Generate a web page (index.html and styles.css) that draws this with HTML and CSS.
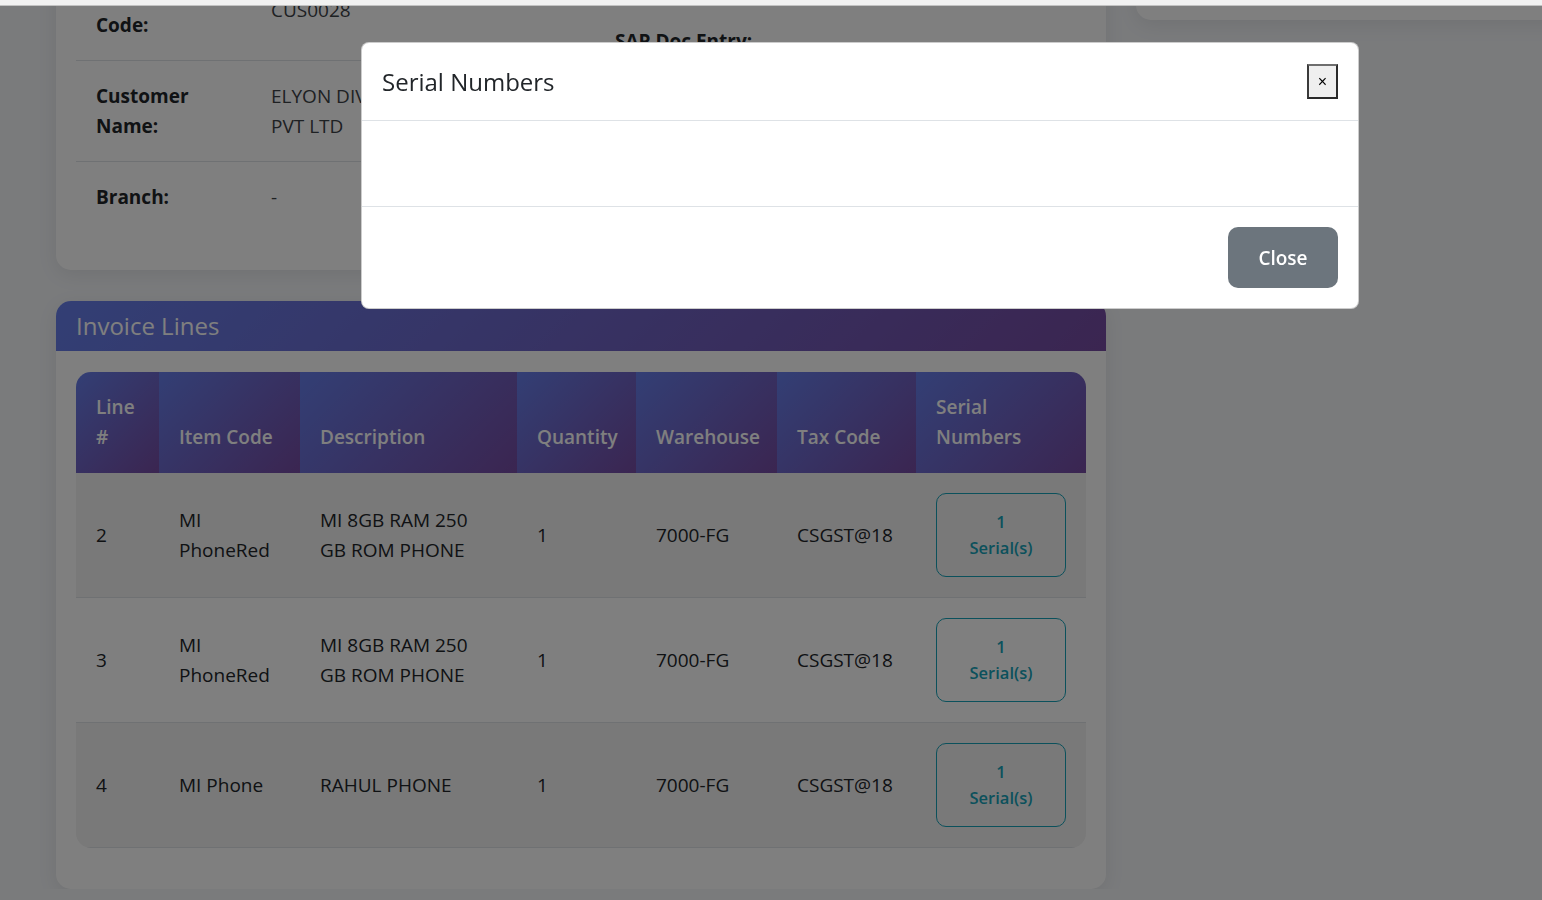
FILE: index.html
```html
<!DOCTYPE html>
<html lang="en">
<head>
<meta charset="utf-8">
<title>Invoice Details</title>
<link rel="stylesheet" href="styles.css">
</head>
<body>
<div class="topbar"></div>

<div class="page">
  <div class="main">
    <section class="card info-card">
      <div class="info-grid">
        <table class="kv">
          <tr><th>Customer Code:</th><td>CUS0028</td></tr>
          <tr><th>Customer Name:</th><td>ELYON DIVINE ENTERPRISES PVT LTD</td></tr>
          <tr><th>Branch:</th><td>-</td></tr>
        </table>
        <table class="kv kv-right">
          <tr><th>SAP Doc Entry:</th><td></td></tr>
          <tr><th>Status:</th><td>Posted</td></tr>
        </table>
      </div>
    </section>

    <section class="card lines-card">
      <header class="card-head"><h2 class="card-title">Invoice Lines</h2></header>
      <div class="card-body">
        <div class="table-wrap">
          <table class="lines">
            <colgroup>
              <col class="c-line"><col class="c-item"><col class="c-desc"><col class="c-qty"><col class="c-wh"><col class="c-tax"><col class="c-serial">
            </colgroup>
            <thead>
              <tr>
                <th>Line #</th><th>Item Code</th><th>Description</th><th>Quantity</th><th>Warehouse</th><th>Tax Code</th><th>Serial Numbers</th>
              </tr>
            </thead>
            <tbody>
              <tr>
                <td>2</td><td>MI PhoneRed</td><td>MI 8GB RAM 250 GB ROM PHONE</td><td>1</td><td class="nowrap">7000-FG</td><td class="nowrap">CSGST@18</td>
                <td><button class="serial-btn"><span class="line">1</span><span class="line">Serial(s)</span></button></td>
              </tr>
              <tr>
                <td>3</td><td>MI PhoneRed</td><td>MI 8GB RAM 250 GB ROM PHONE</td><td>1</td><td class="nowrap">7000-FG</td><td class="nowrap">CSGST@18</td>
                <td><button class="serial-btn"><span class="line">1</span><span class="line">Serial(s)</span></button></td>
              </tr>
              <tr>
                <td>4</td><td>MI Phone</td><td>RAHUL PHONE</td><td>1</td><td class="nowrap">7000-FG</td><td class="nowrap">CSGST@18</td>
                <td><button class="serial-btn"><span class="line">1</span><span class="line">Serial(s)</span></button></td>
              </tr>
            </tbody>
          </table>
        </div>
      </div>
    </section>
  </div>

  <aside class="side">
    <div class="card side-card"></div>
  </aside>
</div>

<div class="backdrop"></div>
<div class="modal" role="dialog">
  <div class="modal-header">
    <h5 class="modal-title">Serial Numbers</h5>
    <button class="x-btn">×</button>
  </div>
  <div class="modal-body"></div>
  <div class="modal-footer">
    <button class="btn-close-modal">Close</button>
  </div>
</div>
</body>
</html>
```

FILE: styles.css
```css
html, body {
  margin: 0;
  padding: 0;
}

body {
  font-family: "Open Sans", "Noto Sans", sans-serif;
  font-size: 19px;
  line-height: 30px;
  color: #212529;
  background: #f4f6f9;
  overflow: hidden;
}

.topbar {
  position: fixed;
  top: 0;
  left: 0;
  right: 0;
  height: 5px;
  background: #f1f1f1;
  border-bottom: 1px solid #c2c2c2;
  z-index: 20;
}

.page {
  display: flex;
  align-items: flex-start;
  gap: 30px;
  padding-left: 56px;
  margin-top: -60px;
  width: max-content;
}

.main {
  width: 1050px;
  display: flex;
  flex-direction: column;
  gap: 31px;
}

.side {
  width: 480px;
}

.card {
  background: #fff;
  border-radius: 15px;
  box-shadow: 0 5px 20px rgba(0, 0, 0, 0.08);
}

.side-card {
  height: 80px;
}

/* info card */
.info-card {
  padding: 20px;
}

.info-grid {
  display: grid;
  grid-template-columns: 1fr 1fr;
  gap: 28px;
  align-items: start;
}

.kv {
  width: 100%;
  border-collapse: collapse;
  margin-bottom: 18px;
}

.kv th,
.kv td {
  padding: 20px;
  text-align: left;
  vertical-align: middle;
  border-bottom: 1px solid #dee2e6;
}

.kv tr:last-child th,
.kv tr:last-child td {
  border-bottom: 0;
}

.kv th {
  width: 135px;
  font-weight: 700;
  color: #212529;
}

.kv td {
  color: #3d4247;
}

.kv-right {
  margin-top: 46px;
}

.kv-right th {
  white-space: nowrap;
}

/* invoice lines */
.card-head {
  background: linear-gradient(135deg, #667eea, #764ba2);
  border-radius: 15px 15px 0 0;
  padding: 10px 20px;
}

.card-title {
  margin: 0;
  font-size: 24px;
  line-height: 30px;
  font-weight: 500;
  color: #fff;
}

.card-body {
  padding: 21px 20px 21px;
}

.table-wrap {
  border-radius: 15px;
  overflow: hidden;
  margin-bottom: 20px;
}

.lines {
  width: 100%;
  border-collapse: collapse;
  table-layout: fixed;
}

.c-line { width: 83px; }
.c-item { width: 141px; }
.c-desc { width: 217px; }
.c-qty { width: 119px; }
.c-wh { width: 141px; }
.c-tax { width: 139px; }
.c-serial { width: 170px; }

.lines th {
  padding: 20px 20px 21px;
  text-align: left;
  vertical-align: bottom;
  font-weight: 600;
  color: #fff;
  background: linear-gradient(135deg, #667eea, #764ba2);
}

.lines td {
  padding: 20px;
  vertical-align: middle;
  border-bottom: 1px solid #dee2e6;
  color: #212529;
}

.lines tbody tr:nth-child(odd) td {
  background: #f2f2f2;
}

.nowrap {
  white-space: nowrap;
}

.serial-btn {
  display: block;
  width: 130px;
  box-sizing: border-box;
  padding: 15px 0;
  border: 1px solid #17a2b8;
  border-radius: 10px;
  background: transparent;
  color: #17a2b8;
  font-family: "Open Sans", "Noto Sans", sans-serif;
  font-size: 16.5px;
  line-height: 26px;
  font-weight: 600;
  text-align: center;
}

.serial-btn .line {
  display: block;
}

/* modal */
.backdrop {
  position: fixed;
  inset: 0;
  background: rgba(0, 0, 0, 0.5);
  z-index: 10;
}

.modal {
  position: fixed;
  left: 361px;
  top: 42px;
  width: 998px;
  box-sizing: border-box;
  background: #fff;
  border: 1px solid rgba(0, 0, 0, 0.2);
  border-radius: 8px;
  z-index: 11;
}

.modal-header {
  display: flex;
  justify-content: space-between;
  align-items: center;
  padding: 20px;
  border-bottom: 1px solid #dee2e6;
}

.modal-title {
  margin: 0;
  font-size: 24px;
  line-height: 37px;
  font-weight: 500;
  color: #212529;
}

.x-btn {
  width: 31px;
  height: 35px;
  padding: 0;
  box-sizing: border-box;
  background: #efefef;
  border: 2px solid #2a2a2a;
  border-top-color: #6e6e6e;
  border-left-color: #3a3a3a;
  font-family: "Liberation Sans", sans-serif;
  font-size: 16px;
  line-height: 1;
  color: #000;
}

.modal-body {
  height: 85px;
  box-sizing: border-box;
}

.modal-footer {
  display: flex;
  justify-content: flex-end;
  padding: 20px;
  border-top: 1px solid #dee2e6;
}

.btn-close-modal {
  width: 110px;
  height: 61px;
  background: #6c757d;
  color: #fff;
  border: 0;
  border-radius: 10px;
  font-family: "Open Sans", "Noto Sans", sans-serif;
  font-size: 19px;
  line-height: 30px;
  font-weight: 600;
}
```
